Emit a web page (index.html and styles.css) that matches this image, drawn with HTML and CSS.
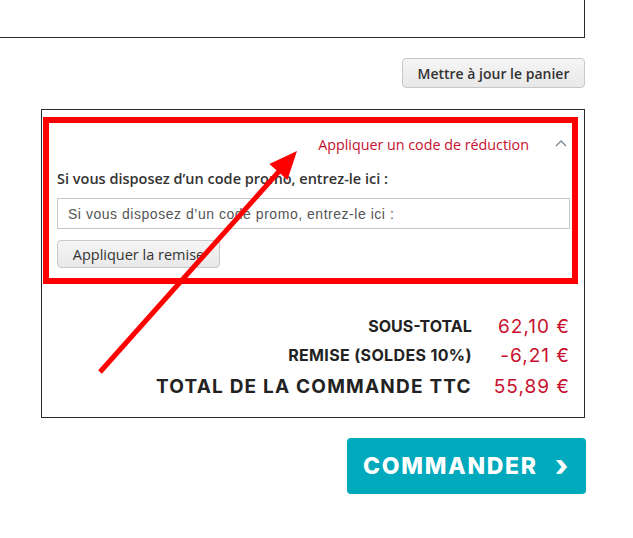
FILE: index.html
```html
<!DOCTYPE html>
<html lang="fr">
<head>
<meta charset="utf-8">
<title>Panier</title>
<link rel="stylesheet" href="styles.css">
</head>
<body>
<div class="page">
  <div class="top-box"></div>
  <div class="update-row">
    <button class="btn-grey btn-update">Mettre à jour le panier</button>
  </div>
  <div class="cart">
    <div class="coupon">
      <div class="coupon-head">
        <span class="coupon-title">Appliquer un code de réduction</span>
        <svg class="chev-up" width="12" height="8" viewBox="0 0 12 8"><path d="M1 7 L6 2 L11 7" fill="none" stroke="#7a8a9a" stroke-width="1.4"/></svg>
      </div>
      <label class="coupon-label" for="promo">Si vous disposez d’un code promo, entrez-le ici :</label>
      <input class="coupon-input" id="promo" type="text" placeholder="Si vous disposez d’un code promo, entrez-le ici :">
      <button class="btn-grey btn-apply">Appliquer la remise</button>
    </div>
    <div class="totals">
      <div class="t-label">SOUS-TOTAL</div><div class="t-value">62,10 €</div>
      <div class="t-label t-remise">REMISE (SOLDES 10%)</div><div class="t-value">-6,21 €</div>
      <div class="t-label t-grand">TOTAL DE LA COMMANDE TTC</div><div class="t-value t-grand-v">55,89 €</div>
    </div>
    <div class="annot-box"></div>
  </div>
  <div class="order-row">
    <button class="btn-order">COMMANDER <span class="order-chev">›</span></button>
  </div>
  <svg class="annot-arrow" width="633" height="538" viewBox="0 0 633 538">
    <line x1="100" y1="372" x2="282" y2="168" stroke="#ff0000" stroke-width="5"/>
    <polygon points="297,151 287.4,179.9 269.4,163.9" fill="#ff0000"/>
  </svg>
</div>
</body>
</html>
```
FILE: styles.css
```css
* { box-sizing: border-box; }
html, body { margin: 0; padding: 0; background: #fff; }
body { font-family: "Open Sans", "Liberation Sans", sans-serif; color: #333; }
.page { position: relative; width: 633px; height: 538px; overflow: hidden; }

.top-box {
  width: 585px;
  height: 38px;
  border: 1px solid #2a2a2a;
  border-top: none;
  border-left: none;
}

.update-row {
  display: flex;
  justify-content: flex-end;
  padding-right: 48px;
  margin-top: 20px;
}

.btn-grey {
  font-family: "Open Sans", sans-serif;
  font-size: 14px;
  font-weight: 600;
  color: #333;
  background: linear-gradient(#f5f5f5, #e8e8e8);
  border: 1px solid #c8c8c8;
  border-radius: 4px;
  cursor: pointer;
}
.btn-update { width: 183px; height: 30px; padding: 0; }

.cart {
  position: relative;
  margin: 21px 48px 0 41px;
  border: 1px solid #2a2a2a;
  height: 309px;
}

.coupon { padding: 24px 14px 0 15px; }
.coupon-head {
  display: flex;
  justify-content: flex-end;
  align-items: center;
  height: 22px;
  gap: 26px;
  padding-right: 3px;
}
.coupon-title { font-size: 14.3px; color: #c8102e; line-height: 20px; }
.chev-up { display: block; margin-top: -4px; }

.coupon-label {
  display: block;
  margin-top: 14px;
  font-size: 14.5px;
  font-weight: 600;
  line-height: 18px;
  color: #333;
}
.coupon-input {
  display: block;
  width: 100%;
  height: 31px;
  margin-top: 10px;
  border: 1px solid #c8c8c8;
  padding: 0 10px;
  font-family: "Liberation Sans", sans-serif;
  font-size: 14px;
  letter-spacing: 0.53px;
  color: #555;
}
.coupon-input::placeholder { color: #555; }
.btn-apply {
  display: block;
  margin-top: 11px;
  width: 163px;
  height: 28px;
  padding: 0;
  font-size: 14.5px;
  font-weight: 400;
}

.totals {
  display: grid;
  grid-template-columns: 1fr auto;
  column-gap: 22px;
  padding: 44px 14px 0 0;
  font-family: Inter, "Liberation Sans", sans-serif;
}
.t-label {
  text-align: right;
  font-weight: 700;
  font-size: 16px;
  line-height: 29px;
  color: #222;
}
.t-remise { letter-spacing: 0.35px; }
.t-value {
  text-align: right;
  font-size: 19px;
  letter-spacing: 1px;
  line-height: 29px;
  color: #c8102e;
}
.t-grand { font-size: 19px; line-height: 34px; letter-spacing: 1.2px; }
.t-grand-v { line-height: 34px; }

.annot-box {
  position: absolute;
  left: 1px;
  top: 7px;
  width: 535px;
  height: 167px;
  border: 6px solid #ff0000;
}

.order-row {
  display: flex;
  justify-content: flex-end;
  padding-right: 47px;
  margin-top: 20px;
}
.btn-order {
  width: 239px;
  height: 56px;
  border: none;
  border-radius: 4px;
  background: #00a9bc;
  color: #fff;
  font-family: Inter, "Liberation Sans", sans-serif;
  font-weight: 800;
  font-size: 23px;
  letter-spacing: 1.7px;
  display: flex;
  align-items: center;
  padding: 0 0 0 16px;
  gap: 17px;
}
.order-chev { font-size: 30px; font-weight: 800; line-height: 1; margin-top: -3px; }

.annot-arrow { position: absolute; left: 0; top: 0; pointer-events: none; }
```
